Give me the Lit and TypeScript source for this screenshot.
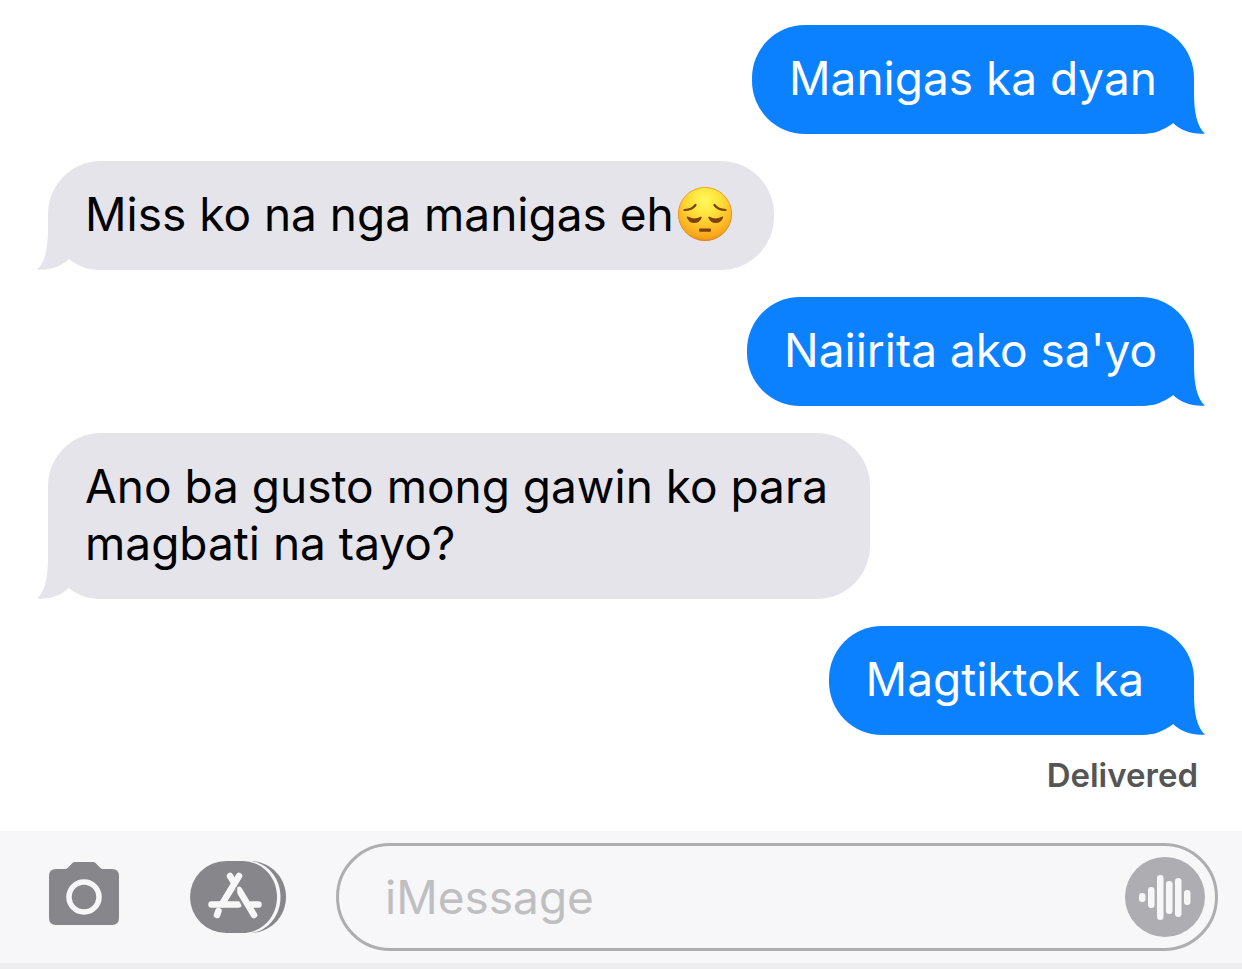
import { LitElement, html, css, nothing } from "lit";
import { customElement, property, state } from "lit/decorators.js";
import { classMap } from "lit/directives/class-map.js";

interface Message {
  text: string;
  sent: boolean;
  pensive?: boolean;
}

const MESSAGES: Message[] = [
  { text: "Manigas ka dyan", sent: true },
  { text: "Miss ko na nga manigas eh", sent: false, pensive: true },
  { text: "Naiirita ako sa'yo", sent: true },
  { text: "Ano ba gusto mong gawin ko para magbati na tayo?", sent: false },
  { text: "Magtiktok ka\u00a0", sent: true },
];

@customElement("chat-bubble")
export class ChatBubble extends LitElement {
  @property({ type: Boolean }) sent = false;
  @property({ type: Boolean }) pensive = false;
  @property() text = "";

  static styles = css`
    :host {
      display: flex;
    }
    .bubble {
      position: relative;
      box-sizing: border-box;
      max-width: 71.7%;
      padding: 25px 37px 27px;
      border-radius: 53px;
      font-size: 46px;
      line-height: 57px;
      background: #e5e4eb;
      color: #000;
    }
    .sent {
      margin-left: auto;
      background: #0b81ff;
      color: #fff;
    }
    .text {
      position: relative;
      margin: 0;
    }
    .tail {
      position: absolute;
      left: -11px;
      bottom: 0;
      width: 65px;
      height: 54px;
      fill: #e5e4eb;
      transform: scaleX(-1);
    }
    .sent .tail {
      left: auto;
      right: -11px;
      fill: #0b81ff;
      transform: none;
    }
    .emoji {
      width: 56px;
      height: 56px;
      margin: -8px 4px -8px 3px;
      vertical-align: -3px;
    }
    .with-emoji {
      white-space: nowrap;
    }
  `;

  private renderPensive() {
    return html`<svg class="emoji" viewBox="0 0 56 56" role="img" aria-label="pensive face">
      <defs>
        <radialGradient id="skin" cx="50%" cy="25%" r="76%">
          <stop offset="0" stop-color="#fff75e" />
          <stop offset="0.3" stop-color="#ffe83f" />
          <stop offset="0.65" stop-color="#fdc229" />
          <stop offset="0.9" stop-color="#f8a51c" />
          <stop offset="1" stop-color="#ea8a1a" />
        </radialGradient>
        <linearGradient id="rim" x1="0" y1="0" x2="0" y2="1">
          <stop offset="0" stop-color="#f3a52c" />
          <stop offset="1" stop-color="#e07f18" />
        </linearGradient>
      </defs>
      <circle cx="28" cy="28" r="26.6" fill="url(#skin)" stroke="url(#rim)" stroke-width="1" />
      <g fill="none" stroke="#7d410f" stroke-linecap="round">
        <path d="M7.500 24C12 24 16 22.500 18.500 19" stroke-width="2.200" />
        <path d="M48.500 24C44 24 40 22.500 37.500 19" stroke-width="2.200" />
      </g>
      <g fill="#7d410f">
        <path d="M9.800 31.500Q9.500 30 11.200 30.800Q17.500 34 23.500 30.800Q25 30.200 24.700 31.800Q22.500 37 17.300 37Q12 37 9.800 31.500Z" />
        <path d="M46.200 31.500Q46.500 30 44.800 30.800Q38.500 34 32.500 30.800Q31 30.200 31.300 31.800Q33.500 37 38.700 37Q44 37 46.200 31.500Z" />
        <rect x="22" y="42.500" width="12" height="3.200" rx="1.200" />
      </g>
    </svg>`;
  }

  render() {
    return html`<div class=${classMap({ bubble: true, sent: this.sent })}>
      <svg class="tail" viewBox="0 0 65 54" aria-hidden="true">
        <path d="M0 0H54V13C54 32 57 47 65 53.500C54 54.500 42 52 32 42C26 47 20 51 15 52.500L0 54Z" />
      </svg>
      <p class=${classMap({ text: true, "with-emoji": this.pensive })}>${this.text}${this.pensive ? this.renderPensive() : nothing}</p>
    </div>`;
  }
}

@customElement("message-composer")
export class MessageComposer extends LitElement {
  @state() private draft = "";

  static styles = css`
    :host {
      display: block;
      background: #f7f7f9;
      border-bottom: 6px solid #ededef;
    }
    .bar {
      display: flex;
      align-items: center;
      padding: 12px 24px 12px 49px;
    }
    button {
      display: block;
      flex: none;
      padding: 0;
      border: 0;
      background: none;
      cursor: pointer;
    }
    svg {
      display: block;
    }
    .camera {
      margin: 0 71px 8px 0;
    }
    .apps {
      margin-right: 50px;
    }
    .field {
      display: flex;
      flex: 1;
      align-items: center;
      min-width: 0;
      box-sizing: border-box;
      height: 108px;
      padding: 0 10px 0 46px;
      border: 3px solid #aeaeb2;
      border-radius: 54px;
    }
    input {
      flex: 1;
      min-width: 0;
      padding: 0;
      border: 0;
      outline: 0;
      background: none;
      color: #000;
      font: inherit;
      font-size: 46px;
      line-height: 57px;
    }
    input::placeholder {
      color: #bfbfc1;
      opacity: 1;
    }
  `;

  private onInput(event: Event) {
    this.draft = (event.target as HTMLInputElement).value;
  }

  render() {
    return html`<form class="bar" @submit=${(e: Event) => e.preventDefault()}>
      <button class="camera" type="button" aria-label="Camera">
        <svg width="70" height="63" viewBox="0 0 70 63">
          <path fill="#87868b" d="M7 7H16Q17.700 7 19 5.500L23.500 1Q24.500 0 26 0H44Q45.500 0 46.500 1L51 5.500Q52.500 7 54 7H63Q70 7 70 14V56Q70 63 63 63H7Q0 63 0 56V14Q0 7 7 7Z" />
          <circle cx="35" cy="35" r="15" fill="none" stroke="#f7f7f9" stroke-width="5.500" />
        </svg>
      </button>
      <button class="apps" type="button" aria-label="Apps">
        <svg width="96" height="72" viewBox="0 0 96 72">
          <path fill="#87868b" d="M60 0C80 0 96 16 96 36S80 72 60 72Z" />
          <path fill="#f7f7f9" d="M54 0H62C79 3 90.500 18 90.500 36S79 69 62 72H54Z" />
          <path fill="#87868b" d="M36 0H52C72 0 87 16 87 36S72 72 52 72H36A36 36 0 0 1 36 0Z" />
          <g fill="none" stroke="#f7f7f9" stroke-width="6.500" stroke-linecap="round">
            <path d="M40 15L44 21.500" />
            <path d="M49 15L32 43" />
            <path d="M21.500 43.500H48.500" />
            <path d="M61 43.500H68.500" />
            <path d="M49 29L64 54" />
            <path d="M28.500 50L27 54" />
          </g>
          <path d="M46.500 26V34L54 47" fill="none" stroke="#87868b" stroke-width="1.500" />
        </svg>
      </button>
      <div class="field">
        <input type="text" aria-label="Message" placeholder="iMessage" .value=${this.draft} @input=${this.onInput} />
        <button type="button" aria-label="Record audio">
          <svg width="80" height="80" viewBox="0 0 80 80">
            <circle cx="40" cy="40" r="40" fill="#aeaeb2" />
            <g fill="#f7f7f9">
              <rect x="14" y="36" width="6.500" height="9" rx="3.200" />
              <rect x="23" y="30" width="6.500" height="21" rx="3.200" />
              <rect x="32" y="18" width="6.500" height="45" rx="3.200" />
              <rect x="41" y="24" width="6.500" height="33" rx="3.200" />
              <rect x="50" y="21" width="6.500" height="39" rx="3.200" />
              <rect x="59" y="33" width="6.500" height="15" rx="3.200" />
            </g>
          </svg>
        </button>
      </div>
    </form>`;
  }
}

@customElement("app-root")
export class AppRoot extends LitElement {
  static styles = css`
    :host {
      display: flex;
      flex-direction: column;
      min-height: 100vh;
      background: #fff;
      font-family: Inter, "Liberation Sans", sans-serif;
    }
    main {
      flex: 1;
      padding: 25px 48px 0;
    }
    .thread {
      display: grid;
      gap: 27px;
      margin: 0;
      padding: 0;
      list-style: none;
    }
    .status {
      margin: 20px -4px 36px 0;
      color: #555556;
      font-size: 33px;
      font-weight: 600;
      line-height: 40px;
      text-align: right;
    }
  `;

  render() {
    return html`
      <main>
        <ol class="thread">
          ${MESSAGES.map(
            (m) => html`<li>
              <chat-bubble .text=${m.text} .sent=${m.sent} .pensive=${m.pensive ?? false}></chat-bubble>
            </li>`,
          )}
        </ol>
        <p class="status">Delivered</p>
      </main>
      <message-composer></message-composer>
    `;
  }
}
